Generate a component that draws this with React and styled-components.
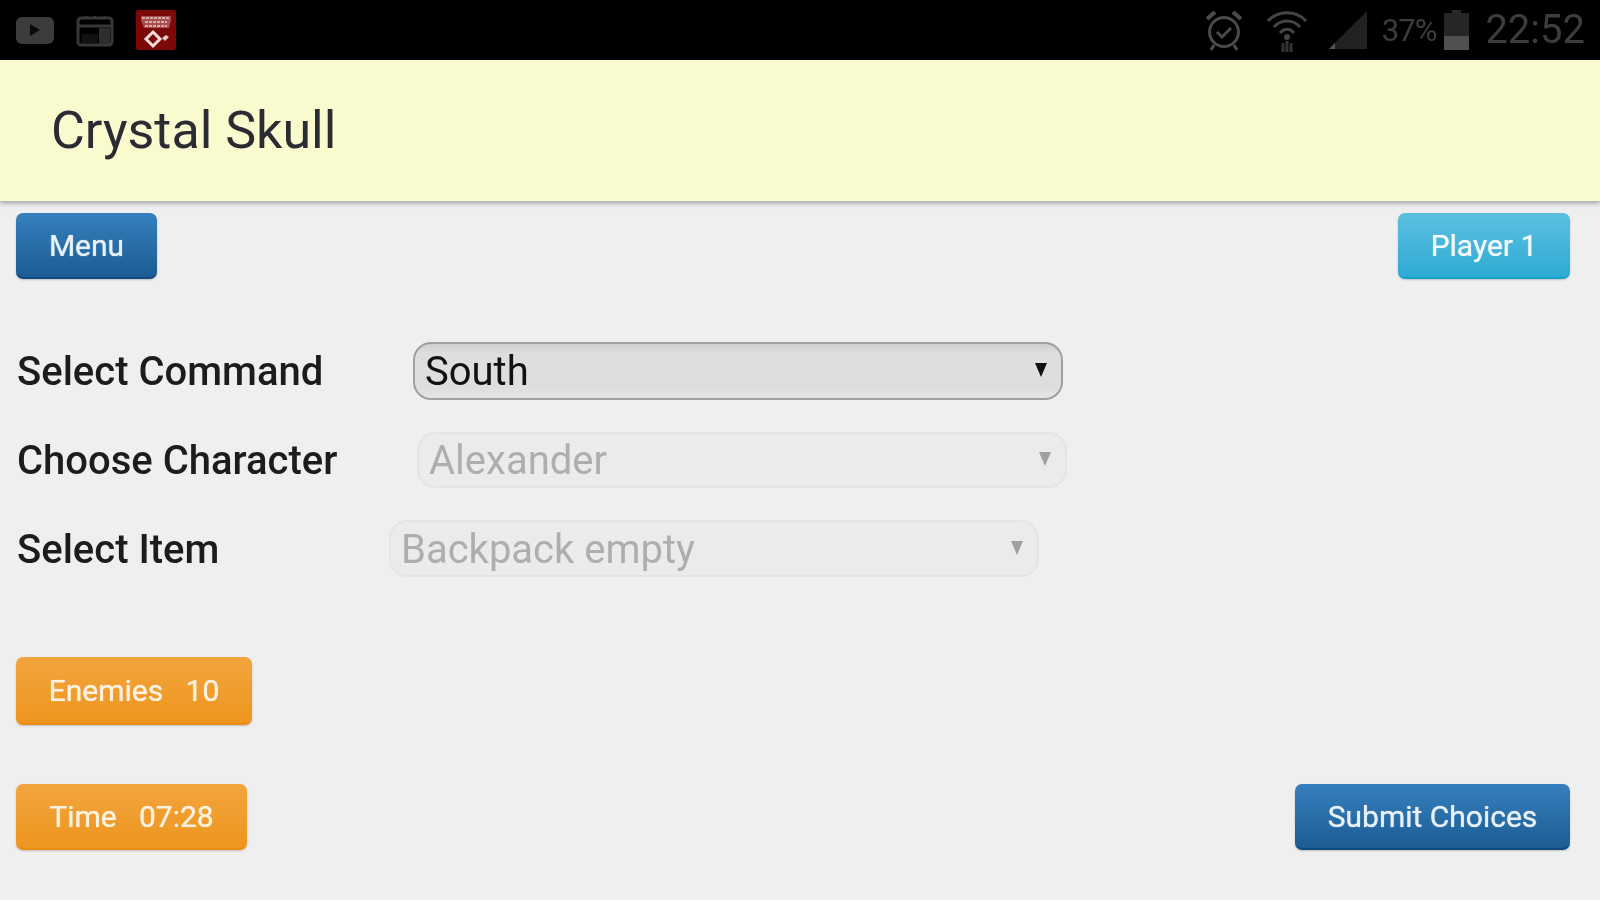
import { createGlobalStyle, styled } from "styled-components";

const GlobalStyle = createGlobalStyle`
  html, body {
    margin: 0;
    padding: 0;
    background: #efefef;
  }
`;

const Screen = styled.div`
  display: flex;
  flex-direction: column;
  width: 1600px;
  height: 900px;
  overflow: hidden;
  background: #efefef;
  font-family: Roboto, "Liberation Sans", sans-serif;
  filter: blur(0.6px);
`;

const StatusBar = styled.div`
  display: flex;
  align-items: center;
  justify-content: space-between;
  flex: none;
  height: 60px;
  padding: 0 15px;
  box-sizing: border-box;
  background: #000;
`;

const StatusGroup = styled.div`
  display: flex;
  align-items: center;
`;

const StatusItem = styled.div`
  display: flex;
  margin-left: ${(p) => p.$left || 0}px;
`;

const StatusText = styled.span`
  margin-left: ${(p) => p.$left || 0}px;
  color: #3d3d3d;
  font-size: ${(p) => p.$size}px;
  line-height: 1;
  letter-spacing: ${(p) => p.$spacing || 0}px;
`;

const Header = styled.header`
  display: flex;
  align-items: center;
  flex: none;
  height: 141px;
  padding-left: 51px;
  box-sizing: border-box;
  background: #f9facd;
  box-shadow: 0 2px 5px rgba(0, 0, 0, 0.35);
`;

const Title = styled.h1`
  margin: 0;
  color: #2b2b33;
  font-size: 52px;
  font-weight: 400;
  line-height: 1;
`;

const Content = styled.main`
  display: flex;
  flex-direction: column;
  flex: 1;
  padding: 12px 30px 0 16px;
`;

const SpacedRow = styled.div`
  display: flex;
  align-items: center;
  justify-content: space-between;
  margin-top: ${(p) => p.$top || 0}px;
`;

const COLORS = {
  blue: { from: "#3580bd", to: "#1c5c94", edge: "#0f4a80", text: "#e8f0f8" },
  cyan: { from: "#5cc0e0", to: "#2faad4", edge: "#16a0cc", text: "#f2fafd" },
  orange: { from: "#f2a53e", to: "#ee951e", edge: "#ea8c10", text: "#fdf2e0" },
};

const Button = styled.button`
  display: flex;
  align-items: center;
  justify-content: center;
  width: ${(p) => p.$width}px;
  height: ${(p) => p.$height || 66}px;
  padding: 0;
  border: 0;
  border-bottom: 2px solid ${(p) => COLORS[p.$tone].edge};
  border-radius: 7px;
  background: linear-gradient(${(p) => COLORS[p.$tone].from}, ${(p) => COLORS[p.$tone].to});
  box-shadow: 0 1px 2px rgba(0, 0, 0, 0.2);
  color: ${(p) => COLORS[p.$tone].text};
  font-family: inherit;
  font-size: 30px;
  font-weight: 400;
  white-space: pre;
  text-shadow: 0 0 1px ${(p) => COLORS[p.$tone].text};
`;

const Form = styled.div`
  display: flex;
  flex-direction: column;
  margin-top: 63px;
`;

const FieldRow = styled.div`
  display: flex;
  align-items: center;
  height: ${(p) => p.$height}px;
  margin-bottom: ${(p) => p.$gap || 0}px;
  padding-left: 1px;
`;

const Label = styled.label`
  flex: none;
  width: ${(p) => p.$width}px;
  padding-top: 2px;
  color: #1c1c1c;
  font-size: 40px;
  font-weight: 500;
  line-height: 1;
`;

const Select = styled.div`
  display: flex;
  align-items: center;
  justify-content: space-between;
  width: 650px;
  height: ${(p) => p.$height}px;
  padding: 2px 14px 0 10px;
  box-sizing: border-box;
  border: 2px solid ${(p) => (p.$disabled ? "#e4e4e4" : "#a0a0a0")};
  border-radius: 18px;
  background: ${(p) =>
    p.$disabled ? "#ebebeb" : "linear-gradient(#cfcfcf, #dedede 18%, #dedede 80%, #e4e4e4)"};
  color: ${(p) => (p.$disabled ? "#aeaeae" : "#111")};
  font-size: 40px;
  line-height: 1;
`;

const Caret = styled.span`
  width: 0;
  height: 0;
  margin-top: -4px;
  border-left: 6px solid transparent;
  border-right: 6px solid transparent;
  border-top: 14px solid ${(p) => (p.$disabled ? "#a0a0a0" : "#111")};
`;

const Counters = styled.div`
  display: flex;
  flex-direction: column;
  margin-top: 80px;
`;

const YoutubeIcon = () => (
  <svg width="40" height="30" viewBox="0 0 40 30">
    <rect x="1" y="2" width="38" height="27" rx="6" fill="#3c3c3c" />
    <path d="M15 9l10 6-10 6z" fill="#0a0a0a" />
  </svg>
);

const CalendarIcon = () => (
  <svg width="38" height="33" viewBox="0 0 38 33" fill="none">
    <rect x="2" y="4" width="34" height="27" rx="3" stroke="#383838" strokeWidth="3" />
    <path d="M3 12h32" stroke="#383838" strokeWidth="3" />
    <path d="M10 2v3M19 2v3M28 2v3" stroke="#383838" strokeWidth="2" />
    <rect x="6" y="20" width="16" height="9" fill="#111" />
    <rect x="23" y="14" width="11" height="16" fill="#2e2e2e" />
  </svg>
);

const GameIcon = () => (
  <svg width="40" height="40" viewBox="0 0 40 40">
    <rect width="40" height="40" rx="2" fill="#7d0808" />
    <path d="M5 6h30v4l-2 8H8L5 10z" fill="#a85050" />
    <path d="M6 8h28M9 12h22M9 16h22" stroke="#e6c8c8" strokeWidth="1.6" strokeDasharray="3 1" />
    <path d="M17 22l7 7-7 7-7-7z" fill="none" stroke="#f2dddd" strokeWidth="3" />
    <path d="M26 28l4-3 3 2-4 4z" fill="#e8cccc" />
  </svg>
);

const AlarmIcon = () => (
  <svg width="38" height="42" viewBox="0 0 38 42" fill="none" stroke="#4a4a4a">
    <circle cx="19" cy="23" r="14.5" strokeWidth="3" />
    <path d="M12 23l5 5 9-9" strokeWidth="3" />
    <path d="M2 10l8-7M36 10l-8-7" strokeWidth="4" />
    <path d="M9 36l-3 5M29 36l3 5" strokeWidth="3" />
  </svg>
);

const WifiIcon = () => (
  <svg width="42" height="44" viewBox="0 0 42 44" fill="none" stroke="#454545">
    <path d="M2 13C12 2 30 2 40 13" strokeWidth="3" />
    <path d="M8 19C15 11 27 11 34 19" strokeWidth="3" />
    <path d="M14 25C18 20 24 20 28 25" strokeWidth="3" />
    <circle cx="21" cy="29" r="3" fill="#454545" stroke="none" />
    <path d="M17 44v-9M21 44V33M25 44v-9" strokeWidth="3" stroke="#333" />
  </svg>
);

const SignalIcon = () => (
  <svg width="40" height="40" viewBox="0 0 40 40">
    <path d="M39 1v38H1z" fill="#222" />
    <path d="M1 39l6-6v6z" fill="#555" />
  </svg>
);

const BatteryIcon = () => (
  <svg width="25" height="40" viewBox="0 0 25 40">
    <rect x="8" y="0" width="9" height="4" fill="#2a2a2a" />
    <rect x="0" y="3" width="25" height="37" rx="1" fill="#262626" />
    <rect x="0" y="26" width="25" height="14" fill="#505050" />
  </svg>
);

export default function App() {
  return (
    <Screen>
      <GlobalStyle />
      <StatusBar>
        <StatusGroup>
          <StatusItem><YoutubeIcon /></StatusItem>
          <StatusItem $left={21}><CalendarIcon /></StatusItem>
          <StatusItem $left={22}><GameIcon /></StatusItem>
        </StatusGroup>
        <StatusGroup>
          <StatusItem><AlarmIcon /></StatusItem>
          <StatusItem $left={23}><WifiIcon /></StatusItem>
          <StatusItem $left={20}><SignalIcon /></StatusItem>
          <StatusText $left={14} $size={31} $spacing={-1}>37%</StatusText>
          <StatusItem $left={8}><BatteryIcon /></StatusItem>
          <StatusText $left={16} $size={40}>22:52</StatusText>
        </StatusGroup>
      </StatusBar>
      <Header>
        <Title>Crystal Skull</Title>
      </Header>
      <Content>
        <SpacedRow>
          <Button $tone="blue" $width={141}>Menu</Button>
          <Button $tone="cyan" $width={172}>Player 1</Button>
        </SpacedRow>
        <Form>
          <FieldRow $height={58} $gap={32}>
            <Label $width={396}>Select Command</Label>
            <Select $height={58}>
              South
              <Caret />
            </Select>
          </FieldRow>
          <FieldRow $height={56} $gap={32}>
            <Label $width={400}>Choose Character</Label>
            <Select $height={56} $disabled>
              Alexander
              <Caret $disabled />
            </Select>
          </FieldRow>
          <FieldRow $height={57}>
            <Label $width={372}>Select Item</Label>
            <Select $height={57} $disabled>
              Backpack empty
              <Caret $disabled />
            </Select>
          </FieldRow>
        </Form>
        <Counters>
          <Button $tone="orange" $width={236} $height={68}>Enemies   10</Button>
        </Counters>
        <SpacedRow $top={59}>
          <Button $tone="orange" $width={231}>Time   07:28</Button>
          <Button $tone="blue" $width={275}>Submit Choices</Button>
        </SpacedRow>
      </Content>
    </Screen>
  );
}
